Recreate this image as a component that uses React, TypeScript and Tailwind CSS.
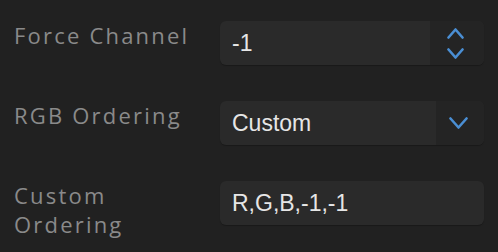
import React from "react";

function Chevron({ up, w, h }: { up?: boolean; w: number; h: number }) {
  return (
    <svg width={w} height={h} viewBox={`0 0 ${w} ${h}`} fill="none">
      <path
        d={up ? `M1.5 ${h - 1.5} L${w / 2} 1.5 L${w - 1.5} ${h - 1.5}` : `M1.5 1.5 L${w / 2} ${h - 1.5} L${w - 1.5} 1.5`}
        stroke="#4a8ed3"
        strokeWidth="2.6"
        strokeLinecap="round"
        strokeLinejoin="round"
      />
    </svg>
  );
}

const label = "font-['Open_Sans',sans-serif] text-[22px] leading-[29px] tracking-[2.2px] text-[#8a8a8a]";
const value = "font-['Liberation_Sans',Arial,sans-serif] text-[23px] text-[#e6e6e6]";

export default function App() {
  return (
    <div className="w-[498px] h-[252px] bg-[#212121] pt-[21px] pl-[14px] pr-[14px]">
      <div className="grid grid-cols-[206px_264px] gap-y-[36px]">
        <div className={label}>Force Channel</div>
        <div className="h-[44px] flex rounded-[6px] bg-[#2a2a2a] overflow-hidden shadow-[0_1px_1px_rgba(0,0,0,0.25)]">
          <div className={`flex-1 flex items-center pl-[12px] ${value}`}>-1</div>
          <div className="w-[54px] bg-[#242424] flex flex-col items-center justify-center gap-[9px] pr-[4px]">
            <Chevron up w={17} h={11} />
            <Chevron w={17} h={11} />
          </div>
        </div>

        <div className={label}>RGB Ordering</div>
        <div className="h-[44px] flex rounded-[6px] bg-[#2a2a2a] overflow-hidden shadow-[0_1px_1px_rgba(0,0,0,0.25)]">
          <div className={`flex-1 flex items-center pl-[12px] ${value}`}>Custom</div>
          <div className="w-[48px] bg-[#242424] flex items-center justify-center pr-[3px]">
            <Chevron w={19} h={12} />
          </div>
        </div>

        <div className={label}>
          Custom
          <br />
          Ordering
        </div>
        <div className="h-[44px] flex items-center rounded-[6px] bg-[#2a2a2a] pl-[12px] shadow-[0_1px_1px_rgba(0,0,0,0.25)]">
          <span className={value}>R,G,B,-1,-1</span>
        </div>
      </div>
    </div>
  );
}
